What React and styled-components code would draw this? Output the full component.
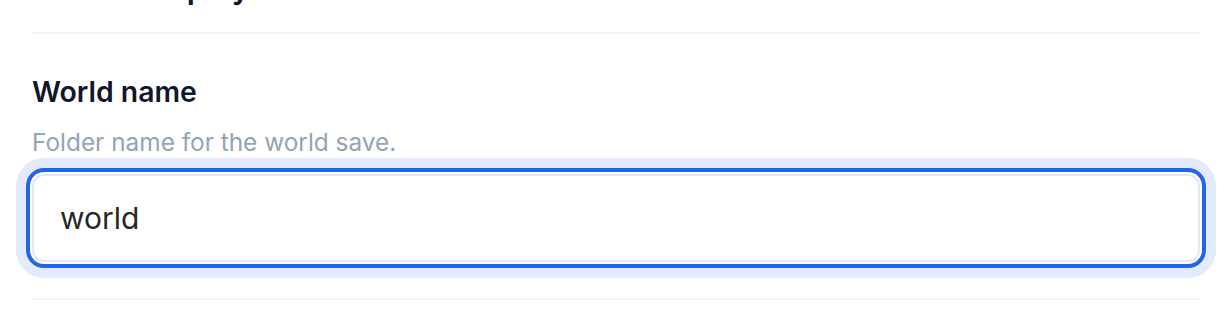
import React from "react";
import styled, { createGlobalStyle } from "styled-components";

const GlobalStyle = createGlobalStyle`
  html, body {
    margin: 0;
    padding: 0;
    background: #ffffff;
    overflow: hidden;
  }
  body {
    font-family: Inter, "Noto Sans", sans-serif;
    -webkit-font-smoothing: antialiased;
  }
`;

const Page = styled.div`
  width: 1232px;
  height: 328px;
  overflow: hidden;
  padding: 0 32px;
  box-sizing: border-box;
`;

const Scroller = styled.div`
  margin-top: -32px;
`;

const Section = styled.section`
  padding: ${(p) => (p.$first ? "0 0 24px" : "38px 0 36px")};
  border-bottom: 2px solid #f1f5f9;
`;

const Label = styled.div`
  font-size: ${(p) => (p.$big ? "31px" : "28.4px")};
  line-height: 40px;
  font-weight: 600;
  color: #0f172a;
`;

const Hint = styled.div`
  margin-top: 12px;
  font-size: 24.4px;
  line-height: 36px;
  color: #94a3b8;
`;

const TextInput = styled.input`
  display: block;
  box-sizing: border-box;
  width: 100%;
  height: 88px;
  margin-top: 14px;
  padding: 0 26px;
  border: 2px solid #e2e8f0;
  border-radius: 12px;
  background: #ffffff;
  font-family: Inter, "Noto Sans", sans-serif;
  font-size: 30px;
  font-weight: 400;
  color: #27272a;
  outline: none;
  box-shadow: 0 0 0 2px #ffffff, 0 0 0 6px #2563eb, 0 0 0 16px #e3eafb;
`;

export default function App() {
  return (
    <>
      <GlobalStyle />
      <Page>
        <Scroller>
          <Section $first>
            <Label $big>Maximum players</Label>
          </Section>
          <Section>
            <Label>World name</Label>
            <Hint>Folder name for the world save.</Hint>
            <TextInput defaultValue="world" />
          </Section>
        </Scroller>
      </Page>
    </>
  );
}
